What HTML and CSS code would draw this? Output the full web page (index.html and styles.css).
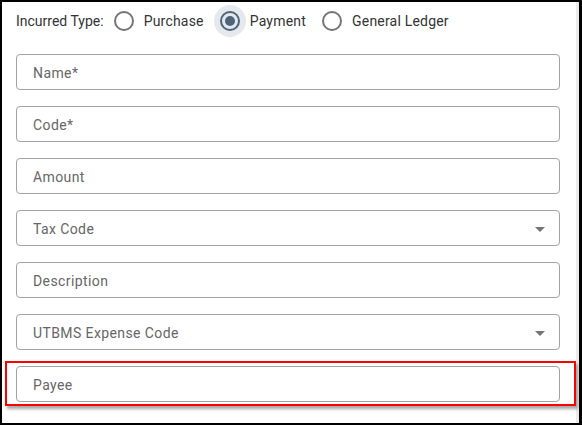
FILE: index.html
```html
<!DOCTYPE html>
<html>
<head>
<meta charset="utf-8">
<link rel="stylesheet" href="styles.css">
</head>
<body>
<div class="frame">
  <div class="inner">
    <div class="form">
      <div class="radio-row">
        <span class="label">Incurred Type:</span>
        <label class="opt"><span class="radio"></span><span>Purchase</span></label>
        <label class="opt"><span class="radio checked"><span class="dot"></span></span><span>Payment</span></label>
        <label class="opt"><span class="radio"></span><span>General Ledger</span></label>
      </div>
      <div class="fields">
        <div class="field">Name*</div>
        <div class="field">Code*</div>
        <div class="field">Amount</div>
        <div class="field select">Tax Code<span class="arrow"></span></div>
        <div class="field">Description</div>
        <div class="field select">UTBMS Expense Code<span class="arrow"></span></div>
        <div class="field highlighted">Payee<span class="highlight"></span></div>
      </div>
    </div>
  </div>
</div>
</body>
</html>
```
FILE: styles.css
```css
html, body {
  margin: 0;
  padding: 0;
  background: #fff;
}
body {
  width: 582px;
  height: 425px;
  font-family: Roboto, "Liberation Sans", sans-serif;
  font-size: 14px;
  color: #333;
}
.frame {
  box-sizing: border-box;
  width: 582px;
  height: 425px;
  border-top: 2px solid #000;
  border-left: 2px solid #000;
  border-bottom: 2px solid #000;
  border-right: 3px solid #000;
}
.inner {
  box-sizing: border-box;
  height: 100%;
  border-right: 3px solid #ebebeb;
}
.form {
  padding: 3px 16px 0 14px;
}
.radio-row {
  display: flex;
  align-items: center;
  height: 32px;
}
.label {
  margin-right: 10px;
}
.opt {
  display: flex;
  align-items: center;
  margin-right: 16px;
  position: relative;
  z-index: 0;
  letter-spacing: 0.2px;
}
.radio {
  box-sizing: border-box;
  width: 20px;
  height: 20px;
  border: 2px solid #757575;
  border-radius: 50%;
  margin-right: 10px;
  position: relative;
  display: flex;
  align-items: center;
  justify-content: center;
}
.radio.checked {
  border-color: #4e6479;
  margin-right: 10px;
}
.radio.checked::before {
  content: "";
  position: absolute;
  width: 32px;
  height: 32px;
  border-radius: 50%;
  background: #e5e9ed;
  left: -8px;
  top: -8px;
  z-index: -1;
}
.dot {
  width: 10px;
  height: 10px;
  border-radius: 50%;
  background: #4e6479;
}
.fields {
  margin-top: 17px;
  display: grid;
  gap: 16px;
}
.field {
  box-sizing: border-box;
  height: 36px;
  border: 1px solid #a3a3a3;
  border-radius: 4px;
  padding-left: 16px;
  padding-top: 1px;
  display: flex;
  align-items: center;
  color: #666;
  letter-spacing: 0.4px;
  position: relative;
}
.arrow {
  position: absolute;
  right: 14px;
  top: 16px;
  width: 0;
  height: 0;
  border-left: 5px solid transparent;
  border-right: 5px solid transparent;
  border-top: 5px solid #757575;
}
.highlight {
  position: absolute;
  left: -12px;
  right: -17px;
  top: -6px;
  bottom: -5px;
  border: 2px solid #f00;
  box-shadow: 2px 3px 3px rgba(0,0,0,0.35);
  pointer-events: none;
}
```
